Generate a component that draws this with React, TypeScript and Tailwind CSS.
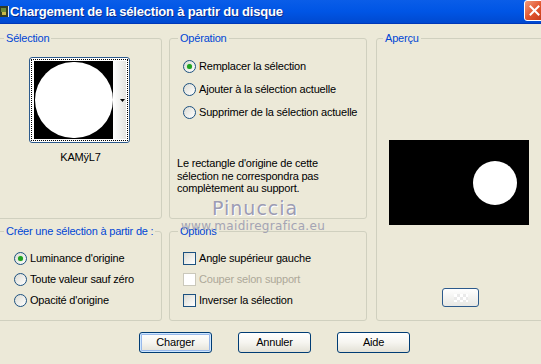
import React from 'react'

const font = "font-['Liberation_Sans','DejaVu_Sans',Arial,sans-serif]"

function Radio({ checked }: { checked?: boolean }) {
  return (
    <span className="w-[13px] h-[13px] shrink-0 rounded-full border border-[#1C5180] bg-linear-to-br from-[#DCDCD4] to-white flex items-center justify-center">
      {checked && <span className="w-[5px] h-[5px] rounded-full bg-[#21A121] shadow-[0_0_1px_#6CD46C]" />}
    </span>
  )
}

function Check({ disabled }: { disabled?: boolean }) {
  return (
    <span
      className={`w-[13px] h-[13px] shrink-0 border ${
        disabled ? 'border-[#CAC8BB] bg-white' : 'border-[#1C5180] bg-linear-to-br from-[#DCDCD4] to-white'
      }`}
    />
  )
}

function Group({ title, className, legendClass = 'ml-[6px]', children }: {
  title: string
  className: string
  legendClass?: string
  children?: React.ReactNode
}) {
  return (
    <fieldset className={`border border-[#D0D0BF] rounded-[3px] p-0 m-0 min-w-0 ${className}`}>
      <legend className={`px-[2px] text-[11px] leading-[13px] whitespace-nowrap text-[#0046D5] ${legendClass}`}>{title}</legend>
      {children}
    </fieldset>
  )
}

function XpButton({ label, isDefault }: { label: string; isDefault?: boolean }) {
  return (
    <button
      className={`w-[73px] h-[21px] rounded-[3px] border border-[#003C74] bg-linear-to-b from-white via-[#F6F5F0] to-[#E3E1D6] text-[11px] text-black ${
        isDefault ? 'shadow-[inset_0_0_0_1px_#CEE7FF,inset_0_0_0_2px_#98B8EA]' : ''
      }`}
    >
      {label}
    </button>
  )
}

export default function App() {
  return (
    <div className={`relative w-[541px] h-[364px] overflow-hidden bg-[#ECE9D8] text-black tracking-[-0.2px] ${font}`}>
      {/* title bar */}
      <div className="h-[24px] flex items-center bg-linear-to-b from-[#0A5DE8] via-[#0055E5] to-[#0049D0] border-b border-[#0038B8]">
        <svg width="9" height="14" viewBox="0 0 9 14" className="shrink-0 mt-[1px]">
          <rect x="0" y="1" width="8" height="11" fill="#2E3B2A" />
          <rect x="1" y="3" width="5" height="4" fill="#6B8A3A" />
          <rect x="2" y="7" width="4" height="3" fill="#C8B84A" />
          <rect x="8" y="1" width="1" height="11" fill="#D8E4F8" />
        </svg>
        <span className="ml-[1px] text-[13px] font-bold tracking-[-0.2px] text-white [text-shadow:1px_1px_0_#0A2A8A]">
          Chargement de la sélection à partir du disque
        </span>
        <div className="ml-auto mr-[-4px] mb-[3px] w-[21px] h-[21px] rounded-[3px] border border-white bg-linear-to-br from-[#F09A7A] via-[#E2552D] to-[#C2391A] flex items-center justify-center">
          <svg width="11" height="11" viewBox="0 0 11 11">
            <path d="M1.5 1.5 L9.5 9.5 M9.5 1.5 L1.5 9.5" stroke="white" strokeWidth="2" strokeLinecap="square" />
          </svg>
        </div>
      </div>

      {/* groups */}
      <div className="flex ml-[-3px] mt-[8px]">
        <div className="flex flex-col w-[165px] shrink-0">
          <Group title="Sélection" className="h-[187px]" legendClass="ml-[6px]">
            <div className="flex flex-col items-center">
              <div className="mt-[12px] w-[101px] h-[86px] rounded-[3px] border border-[#2C5A8C] bg-white p-[1px]">
                <div className="h-full border border-dotted border-black flex pt-[1px] pl-[2px] pr-[1px]">
                  <div className="w-[79px] h-[78px] bg-black flex items-center justify-center">
                    <div className="w-[78px] h-[76px] rounded-full bg-white" />
                  </div>
                  <div className="flex-1 h-[78px] bg-linear-to-r from-white to-[#E4E4E0] flex items-center justify-end pr-[1px]">
                    <svg width="5" height="3" viewBox="0 0 5 3">
                      <path d="M0 0 H5 L2.5 3 Z" fill="black" />
                    </svg>
                  </div>
                </div>
              </div>
              <span className="mt-[8px] ml-[2px] text-[11px] leading-[13px]">KAMÿL7</span>
            </div>
          </Group>
          <Group title="Créer une sélection à partir de :" className="mt-[6px] h-[96px]" legendClass="ml-[6px]">
            <div className="flex flex-col pl-[16px] pt-[10px]">
              {['Luminance d\'origine', 'Toute valeur sauf zéro', 'Opacité d\'origine'].map((t, i) => (
                <div key={t} className="h-[21px] flex items-center gap-[3px] text-[11px]">
                  <Radio checked={i === 0} />
                  <span>{t}</span>
                </div>
              ))}
            </div>
          </Group>
        </div>

        <div className="flex flex-col w-[198px] shrink-0 ml-[7px]">
          <Group title="Opération" className="h-[187px]" legendClass="ml-[8px]">
            <div className="flex flex-col pl-[13px] pt-[10px]">
              {['Remplacer la sélection', 'Ajouter à la sélection actuelle', 'Supprimer de la sélection actuelle'].map((t, i) => (
                <div key={t} className="h-[23px] flex items-center gap-[3px] text-[11px]">
                  <Radio checked={i === 0} />
                  <span>{t}</span>
                </div>
              ))}
              <p className="mt-[33px] ml-[-6px] text-[11px] leading-[12.5px]">
                Le rectangle d'origine de cette<br />
                sélection ne correspondra pas<br />
                complètement au support.
              </p>
            </div>
          </Group>
          <Group title="Options" className="mt-[6px] h-[96px]" legendClass="ml-[8px]">
            <div className="flex flex-col pl-[13px] pt-[10px]">
              <div className="h-[21px] flex items-center gap-[3px] text-[11px]">
                <Check />
                <span>Angle supérieur gauche</span>
              </div>
              <div className="h-[21px] flex items-center gap-[3px] text-[11px] text-[#ACA899]">
                <Check disabled />
                <span>Couper selon support</span>
              </div>
              <div className="h-[21px] flex items-center gap-[3px] text-[11px]">
                <Check />
                <span>Inverser la sélection</span>
              </div>
            </div>
          </Group>
        </div>

        <Group title="Aperçu" className="ml-[9px] w-[168px] shrink-0 h-[289px]" legendClass="ml-[6px]">
          <div className="flex flex-col items-start pl-[12px]">
            <div className="mt-[95px] w-[140px] h-[85px] bg-black flex items-center justify-end pr-[12px]">
              <div className="w-[44px] h-[44px] rounded-full bg-white" />
            </div>
            <div className="mt-[63px] ml-[53px] w-[37px] h-[19px] rounded-[3px] border border-[#2C5A8C] bg-linear-to-b from-white to-[#E8E8E4] flex items-center justify-center">
              <div className="w-[14px] h-[8px] bg-[repeating-conic-gradient(#EAEAEA_0_25%,#FFFFFF_0_50%)] bg-[length:6px_6px]" />
            </div>
          </div>
        </Group>
      </div>

      {/* buttons */}
      <div className="flex gap-[26px] ml-[139px] mt-[11px]">
        <XpButton label="Charger" isDefault />
        <XpButton label="Annuler" />
        <XpButton label="Aide" />
      </div>

      {/* watermark */}
      <span className="absolute left-[212px] top-[198px] text-[19px] leading-[20px] tracking-[1px] text-[#9C9CB4] [text-shadow:1px_1px_0_#FFFFFF] font-['DejaVu_Sans',sans-serif]">
        Pinuccia
      </span>
      <span className="absolute left-[181px] top-[219px] text-[12px] leading-[14px] tracking-[0.3px] text-[#A4A4B4] font-['DejaVu_Sans',sans-serif]">
        www.maidiregrafica.eu
      </span>
    </div>
  )
}
